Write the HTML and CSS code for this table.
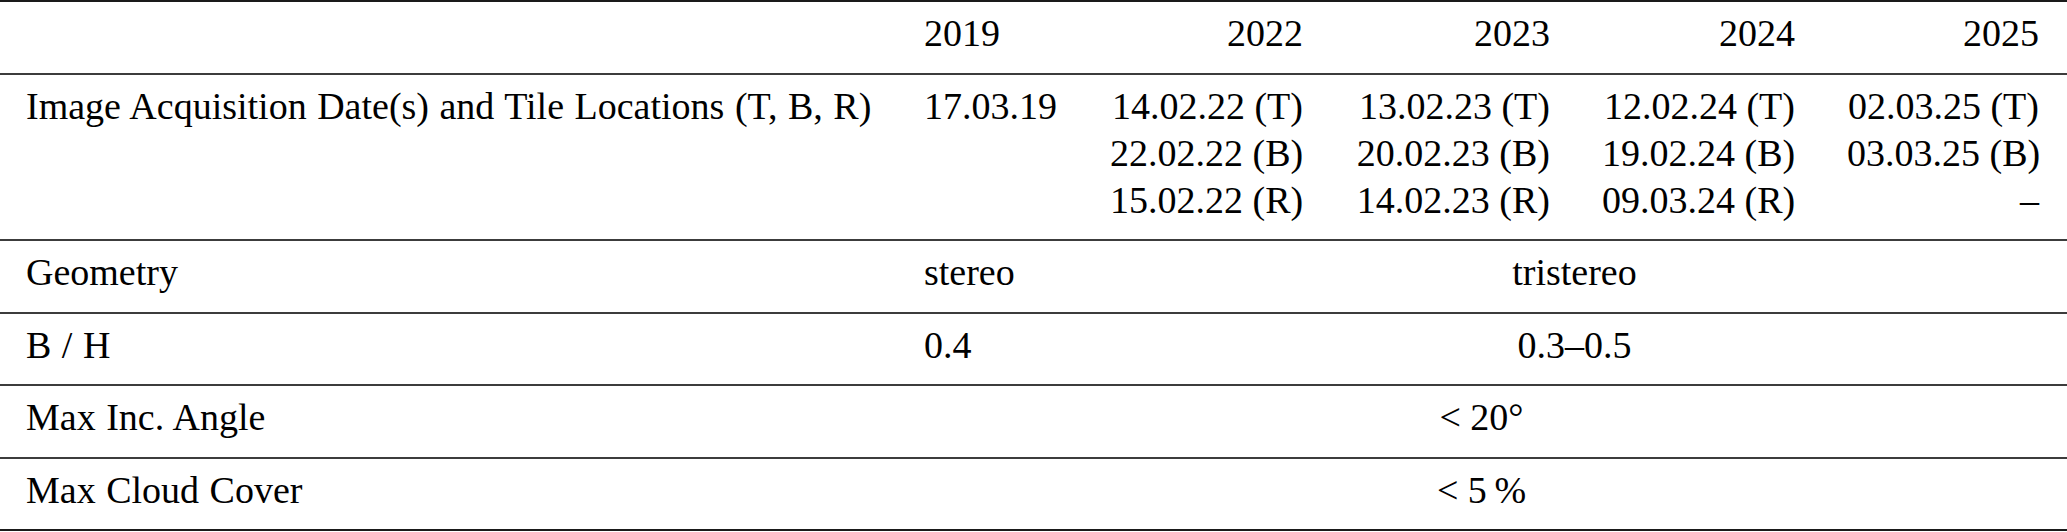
FILE: index.html
```html
<!DOCTYPE html>
<html lang="en">
<head>
  <meta charset="UTF-8" />
  <title>Acquisition Table</title>
  <link rel="stylesheet" href="styles.css">
</head>
<body>

  <table class="specs">
    <colgroup>
      <col class="c-label">
      <col class="c-2019">
      <col class="c-year">
      <col class="c-year2">
      <col class="c-year">
      <col class="c-last">
    </colgroup>
    <thead>
      <tr>
        <th></th>
        <th class="left">2019</th>
        <th>2022</th>
        <th>2023</th>
        <th>2024</th>
        <th>2025</th>
      </tr>
    </thead>
    <tbody>
      <tr>
        <td>Image Acquisition Date(s) and Tile Locations (T, B, R)</td>
        <td class="left">17.03.19</td>
        <td>14.02.22 (T)<br>22.02.22 (B)<br>15.02.22 (R)</td>
        <td>13.02.23 (T)<br>20.02.23 (B)<br>14.02.23 (R)</td>
        <td>12.02.24 (T)<br>19.02.24 (B)<br>09.03.24 (R)</td>
        <td>02.03.25 (T)<br>03.03.25 (B)<br>–</td>
      </tr>
      <tr>
        <td>Geometry</td>
        <td class="left">stereo</td>
        <td colspan="4" class="center">tristereo</td>
      </tr>
      <tr>
        <td>B / H</td>
        <td class="left">0.4</td>
        <td colspan="4" class="center">0.3–0.5</td>
      </tr>
      <tr>
        <td>Max Inc. Angle</td>
        <td colspan="5" class="center">&lt; 20°</td>
      </tr>
      <tr>
        <td>Max Cloud Cover</td>
        <td colspan="5" class="center">&lt; 5&thinsp;%</td>
      </tr>
    </tbody>
  </table>

</body>
</html>
```

FILE: styles.css
```css
body {
  font-family: "Liberation Serif", "Times New Roman", serif;
  background-color: #ffffff;
  color: #000000;
  margin: 0;
}


.specs {
  width: 2067px;
  table-layout: fixed;
  border-collapse: separate;
  border-spacing: 0;
  font-size: 38px;
  line-height: 47px;
}

.c-label { width: 898px; }
.c-2019 { width: 186px; }
.c-year { width: 245px; }
.c-year2 { width: 247px; }
.c-last { width: 246px; }


.specs th,
.specs td {
  font-weight: normal;
  padding: 8px 26px 15.5px 26px;
  text-align: right;
  vertical-align: top;
  white-space: nowrap;
  border-bottom: 2px solid #3c3c3c;
}

.specs th {
  border-top: 2px solid #1a1a1a;
}

.specs tbody tr:last-child td {
  border-bottom-color: #1a1a1a;
}

.specs th:first-child,
.specs td:first-child,
.specs .left {
  text-align: left;
}

.specs td:first-child {
  word-spacing: 1px;
}

.specs th:last-child,
.specs td:last-child {
  padding-right: 28px;
}

.specs .center {
  text-align: center;
}
```
